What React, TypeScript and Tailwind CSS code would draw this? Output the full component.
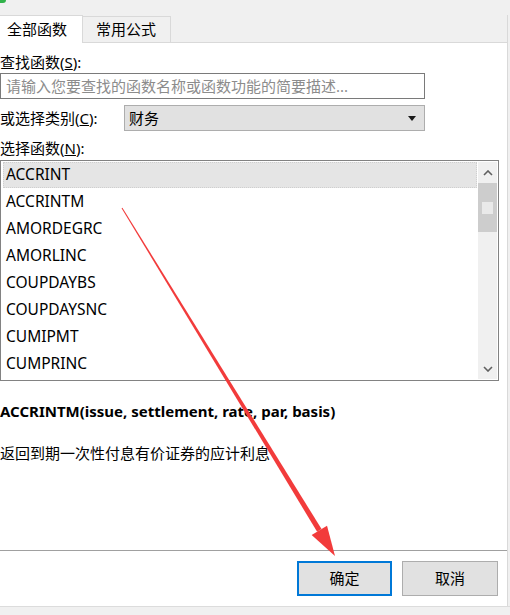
const functions = [
  'ACCRINT',
  'ACCRINTM',
  'AMORDEGRC',
  'AMORLINC',
  'COUPDAYBS',
  'COUPDAYSNC',
  'CUMIPMT',
  'CUMPRINC',
]

const font = { fontFamily: '"Noto Sans", "Noto Sans CJK SC", sans-serif' }

const Arrow = () => {
  // red annotation arrow drawn over the dialog
  const ux = 0.522
  const uy = 0.853
  const px = 0.853
  const py = -0.522
  const tip = [335, 556]
  const base = [tip[0] - 30 * ux, tip[1] - 30 * uy]
  const start = [122, 208]
  const shaft = [
    [start[0] + 0.5 * px, start[1] + 0.5 * py],
    [base[0] + 2.6 * px, base[1] + 2.6 * py],
    [base[0] - 2.6 * px, base[1] - 2.6 * py],
    [start[0] - 0.5 * px, start[1] - 0.5 * py],
  ]
  const head = [
    tip,
    [base[0] + 9 * px, base[1] + 9 * py],
    [base[0] - 9 * px, base[1] - 9 * py],
  ]
  const pts = (a: number[][]) => a.map((p) => p.join(',')).join(' ')
  return (
    <svg className="pointer-events-none absolute inset-0" width={510} height={615}>
      <polygon points={pts(shaft)} fill="#f23b3b" />
      <polygon points={pts(head)} fill="#f23b3b" />
    </svg>
  )
}

const App = () => {
  return (
    <div
      className="relative flex h-[615px] w-[510px] flex-col overflow-hidden bg-[#f0f0f0] text-[15px] text-black"
      style={font}
    >
      <div className="relative h-[15px] w-[508px]">
        <span className="absolute top-0 left-0 h-[3px] w-[6px] rounded-br-[3px] bg-[#31b24a]" />
      </div>

      <div className="flex h-[28px] w-[508px] items-end">
        <div className="flex h-[28px] w-[83px] items-center border-t border-r border-[#d9d9d9] bg-white pl-[7px]">
          全部函数
        </div>
        <div className="flex h-[27px] w-[88px] items-center border-t border-r border-b border-[#d9d9d9] bg-[#f0f0f0] pl-[13px]">
          常用公式
        </div>
        <div className="h-[28px] flex-1 border-r border-b border-[#d9d9d9]" />
      </div>

      <div className="flex h-[563px] w-[508px] flex-col border-r border-[#d9d9d9] bg-white pt-[9px]">
        <div className="leading-[20px]">
          查找函数(<span className="underline">S</span>):
        </div>
        <div className="mt-[1px] flex h-[26px] w-[425px] items-center border border-[#7a7a7a] pl-[5px] text-[#8c8c8c]">
          请输入您要查找的函数名称或函数功能的简要描述...
        </div>

        <div className="mt-[6px] flex h-[26px] items-center">
          <div className="w-[124px] leading-[20px]">
            或选择类别(<span className="underline">C</span>):
          </div>
          <div className="flex h-[26px] w-[301px] items-center justify-between border border-[#adadad] bg-[#e1e1e1] pr-[8px] pl-[4px]">
            <span>财务</span>
            <svg width="8" height="5" viewBox="0 0 8 5">
              <polygon points="0,0 8,0 4,5" fill="#1a1a1a" />
            </svg>
          </div>
        </div>

        <div className="mt-[7px] leading-[20px]">
          选择函数(<span className="underline">N</span>):
        </div>

        <div className="mt-[2px] flex h-[221px] w-[499px] border border-[#828282] pt-[1px] pr-[1px] pb-[1px] pl-[2px]">
          <div className="flex flex-1 flex-col">
            {functions.map((name, i) => (
              <div
                key={name}
                className={
                  i === 0
                    ? 'flex h-[26px] items-center border border-dotted border-[#cfcfcf] bg-[#e5e5e5] pl-[2px] text-[15.5px]'
                    : 'flex h-[27px] items-center pl-[3px] text-[15.5px]'
                }
              >
                {name}
              </div>
            ))}
          </div>
          <div className="ml-[1px] flex w-[19px] flex-col bg-[#f0f0f0]">
            <div className="flex h-[21px] items-center justify-center">
              <svg width="10" height="6" viewBox="0 0 10 6">
                <polyline points="1,5 5,1 9,5" fill="none" stroke="#606060" strokeWidth="1.6" />
              </svg>
            </div>
            <div className="flex h-[49px] items-center justify-center bg-[#cdcdcd]">
              <div className="h-[12px] w-[11px] bg-[#e9e9e9]" />
            </div>
            <div className="flex-1" />
            <div className="flex h-[21px] items-center justify-center">
              <svg width="10" height="6" viewBox="0 0 10 6">
                <polyline points="1,1 5,5 9,1" fill="none" stroke="#606060" strokeWidth="1.6" />
              </svg>
            </div>
          </div>
        </div>

        <div className="mt-[20px] font-bold leading-[20px]">
          ACCRINTM(issue, settlement, rate, par, basis)
        </div>
        <div className="mt-[22px] leading-[20px]">返回到期一次性付息有价证券的应计利息</div>

        <div className="mt-[87px] h-px w-full bg-[#a0a0a0]" />

        <div className="mt-[10px] flex justify-end gap-[10px] pr-[9px]">
          <button className="flex h-[35px] w-[95px] items-center justify-center border-2 border-[#0078d7] bg-[#e1e1e1]">
            确定
          </button>
          <button className="flex h-[35px] w-[96px] items-center justify-center border border-[#adadad] bg-[#e1e1e1]">
            取消
          </button>
        </div>
      </div>

      <div className="flex-1 border-t border-[#dcdcdc] bg-[#f0f0f0]" />

      <Arrow />
    </div>
  )
}

export default App
